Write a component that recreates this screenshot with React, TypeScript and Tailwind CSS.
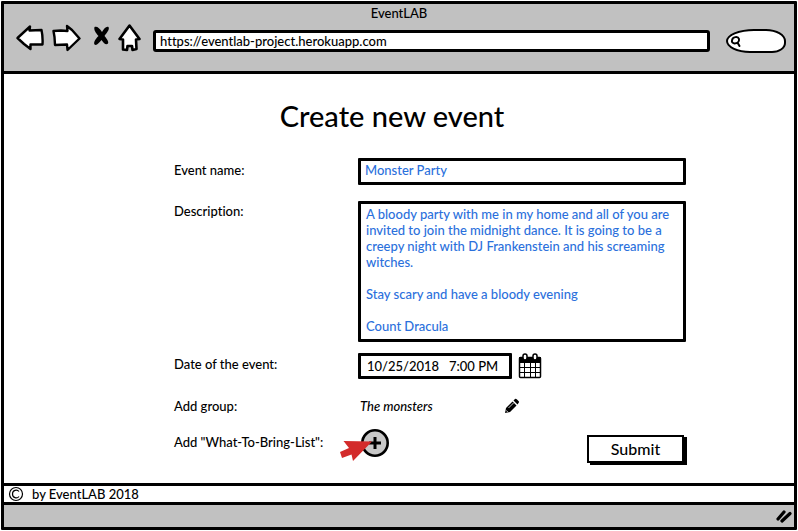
import { useState } from "react";

function BackIcon() {
  return (
    <svg width="28" height="28" viewBox="0 0 28 28" fill="white" stroke="black" strokeWidth="2.4" strokeLinejoin="round" aria-hidden="true">
      <path d="M1.5 14 L14 2.5 L13.5 6.5 L25.5 6 Q27 13 26.5 20.500 L14.5 20.500 L14.5 25 L8 20 Z" />
    </svg>
  );
}

function ForwardIcon() {
  return (
    <svg width="29" height="28" viewBox="0 0 29 28" fill="white" stroke="black" strokeWidth="2.4" strokeLinejoin="round" aria-hidden="true">
      <path d="M1.5 7 L9 6.500 L15.500 7 L15 2 L20 6 L27.500 14.500 L15.500 26 L15 20.500 L3 21 L2.500 13 Z" />
    </svg>
  );
}

function StopIcon() {
  return (
    <svg width="17" height="20" viewBox="0 0 17 20" fill="black" aria-hidden="true">
      <path d="M1.500 1 C4 0 6.500 2 9 6 C11 3 13 0 15.500 1 C17 3.500 13.500 7 11.500 10 C14 13 16 16 15 17.500 C13 19.500 10.500 17 8.500 14 C6 17 3.500 20 1.500 18.500 C0 16 3.500 12 5.500 10 C3 7 .5 4 1.500 1 Z" />
    </svg>
  );
}

function HomeIcon() {
  return (
    <svg width="23" height="28" viewBox="0 0 23 28" fill="white" stroke="black" strokeWidth="2.6" strokeLinejoin="round" strokeLinecap="round" aria-hidden="true">
      <path d="M11.500 1.500 L21.500 15 L18 15.500 L18.500 25 L14.500 26 L14 22 L9.500 22 L9 26 L5 25.500 L5 15.500 L1.500 15 Z" />
    </svg>
  );
}

function SearchIcon() {
  return (
    <svg width="12" height="13" viewBox="0 0 12 13" fill="none" stroke="black" strokeWidth="2" strokeLinecap="round" aria-hidden="true">
      <path d="M2 5.500 C2.500 1.500 8 1 9 4 C9.500 7.500 7 8.500 4.500 8.500 C2.500 8 1.500 7 2 5.500 M8 8.500 L9.500 11" />
    </svg>
  );
}

function CalendarIcon() {
  return (
    <svg width="24" height="26" viewBox="0 0 24 26" aria-hidden="true">
      <rect x="1.500" y="4.500" width="21" height="20" rx="1" fill="white" stroke="black" strokeWidth="1.500" />
      <path d="M1 4h22v6H1z" />
      <path d="M6.500 10v14M12.500 10v14M17.500 10v14M2 14.500h20M2 19.500h20" stroke="black" strokeWidth="1" />
      <rect x="5" y="1" width="4" height="6" rx="2" fill="white" stroke="black" strokeWidth="1.500" />
      <rect x="15" y="1" width="4" height="6" rx="2" fill="white" stroke="black" strokeWidth="1.500" />
    </svg>
  );
}

function PencilIcon() {
  return (
    <svg width="16" height="16" viewBox="0 0 16 16" aria-hidden="true">
      <path d="M1 15 L2 10 L8.500 3.500 L12.500 7.500 L6 14 Z M9.500 2.500 L11 1 Q12 .5 13 1.500 L14.500 3 Q15.500 4 14.500 5 L13.500 6.500 Z" />
      <path d="M4.500 10 L9.500 5" stroke="white" strokeWidth=".8" />
      <path d="M2.300 12.500 L3.600 13.800" stroke="white" strokeWidth="1" />
    </svg>
  );
}

function PlusIcon() {
  return (
    <svg width="30" height="30" viewBox="0 0 30 30" aria-hidden="true">
      <circle cx="15" cy="15" r="12.700" fill="#c8c8c8" stroke="black" strokeWidth="2.600" />
      <path d="M15 9v12M9 15h12" stroke="black" strokeWidth="3" />
    </svg>
  );
}

function PointerArrow() {
  return (
    <svg width="33" height="22" viewBox="0 0 33 22" fill="#d32b2b" aria-hidden="true">
      <path d="M3.500 1 L32 1.500 L13 21 L11.500 14.500 L2 18 L0 12 L9 8 Z" />
    </svg>
  );
}

const label = "text-[13px] leading-5";
const field = "w-full border-[3px] border-black rounded-[1px] bg-white text-[13px] text-[#2b70dc] outline-none";

export default function App() {
  const [name, setName] = useState("Monster Party");
  const [description, setDescription] = useState(
    "A bloody party with me in my home and all of you are invited to join the midnight dance. It is going to be a creepy night with DJ Frankenstein and his screaming witches.\n\nStay scary and have a bloody evening\n\nCount Dracula",
  );
  const [date, setDate] = useState("10/25/2018   7:00 PM");
  const [url, setUrl] = useState("https://eventlab-project.herokuapp.com");

  return (
    <div className="flex min-h-screen flex-col bg-white p-px font-['Lato',sans-serif] font-medium text-black [font-variant-ligatures:none]">
      <div className="flex flex-1 flex-col rounded-[1px] border-[3px] border-black">
        <header className="border-b-[3px] border-black bg-[#c1c1c1] pb-[18px]">
          <div className="text-center text-[13px] leading-[18px]">EventLAB</div>
          <div className="flex items-start pt-0.5 pr-2 pl-3">
            <button type="button" aria-label="Back" className="mr-2"><BackIcon /></button>
            <button type="button" aria-label="Forward" className="mr-3"><ForwardIcon /></button>
            <button type="button" aria-label="Stop" className="mt-0.5 mr-2"><StopIcon /></button>
            <button type="button" aria-label="Home" className="mr-3"><HomeIcon /></button>
            <input
              aria-label="Address"
              value={url}
              onChange={(e) => setUrl(e.target.value)}
              className="mt-1.5 h-[22px] min-w-0 flex-1 rounded-[3px] border-[3px] border-black bg-white px-1 text-[13px] leading-4 outline-none"
            />
            <label className="mt-[5px] ml-4 flex h-6 w-[60px] items-center rounded-[28px_20px_14px_24px/12px_12px_10px_12px] border-[2px] border-black bg-white pl-0.5">
              <SearchIcon />
              <input aria-label="Search" className="w-9 bg-transparent text-[13px] outline-none" />
            </label>
          </div>
        </header>

        <main className="flex-1 pt-6 pr-[108px] pb-4 pl-[170px]">
          <h1 className="pr-[76px] text-center text-[29px] leading-9">Create new event</h1>
          <form className="mt-6 grid grid-cols-[184px_minmax(0,1fr)]" onSubmit={(e) => e.preventDefault()}>
            <label htmlFor="name" className={`${label} pt-0.5`}>Event name:</label>
            <input id="name" value={name} onChange={(e) => setName(e.target.value)} className={`${field} h-[27px] px-1 pb-1`} />

            <label htmlFor="description" className={`${label} mt-4`}>Description:</label>
            <textarea
              id="description"
              value={description}
              onChange={(e) => setDescription(e.target.value)}
              className={`${field} mt-4 h-[141px] resize-none overflow-hidden py-0.5 pr-0 pl-[5px] leading-4`}
            />

            <label htmlFor="date" className={`${label} mt-3`}>Date of the event:</label>
            <div className="mt-[11px] flex items-center gap-1.5">
              <input
                id="date"
                value={date}
                onChange={(e) => setDate(e.target.value)}
                className="h-[26px] w-[154px] rounded-[1px] border-[3px] border-black bg-white px-1.5 text-[13px] outline-none"
              />
              <button type="button" aria-label="Pick a date"><CalendarIcon /></button>
            </div>

            <span className={`${label} mt-[17px]`}>Add group:</span>
            <div className="mt-[17px] flex w-[162px] items-center justify-between pl-0.5">
              <span className="text-[13px] leading-5 italic">The monsters</span>
              <button type="button" aria-label="Edit group"><PencilIcon /></button>
            </div>

            <span className={`${label} mt-4`}>Add "What-To-Bring-List":</span>
            <div className="mt-3 flex items-start justify-between">
              <div className="relative ml-0.5">
                <button type="button" aria-label="Add what-to-bring list" className="block"><PlusIcon /></button>
                <span className="pointer-events-none absolute top-3 -left-5"><PointerArrow /></span>
              </div>
              <button
                type="submit"
                className="mt-[7px] mr-0.5 h-7 w-[97px] border-2 border-black bg-white text-base leading-6 shadow-[3px_2px_0_0_#000]"
              >
                Submit
              </button>
            </div>
          </form>
        </main>

        <footer className="flex h-[19px] items-center gap-2 border-t-[3px] border-black pl-1 text-[13px] leading-4">
          <svg width="16" height="16" viewBox="0 0 16 16" fill="none" stroke="black" strokeWidth="1.200" aria-label="Copyright" role="img">
            <circle cx="8" cy="8" r="6.500" />
            <path d="M11 5.500 C9 3 4.500 4 4.500 8 C4.500 12 9 13 11 10.500" />
          </svg>
          <span>by EventLAB 2018</span>
        </footer>
        <div className="flex h-[25px] items-center justify-end border-t-[3px] border-black bg-[#c1c1c1] pr-0.5">
          <svg width="16" height="14" viewBox="0 0 16 14" stroke="black" strokeWidth="3.200" strokeLinecap="round" aria-hidden="true">
            <path d="M2 10 L8 3 M6 12 L14 4.500" />
          </svg>
        </div>
      </div>
    </div>
  );
}
